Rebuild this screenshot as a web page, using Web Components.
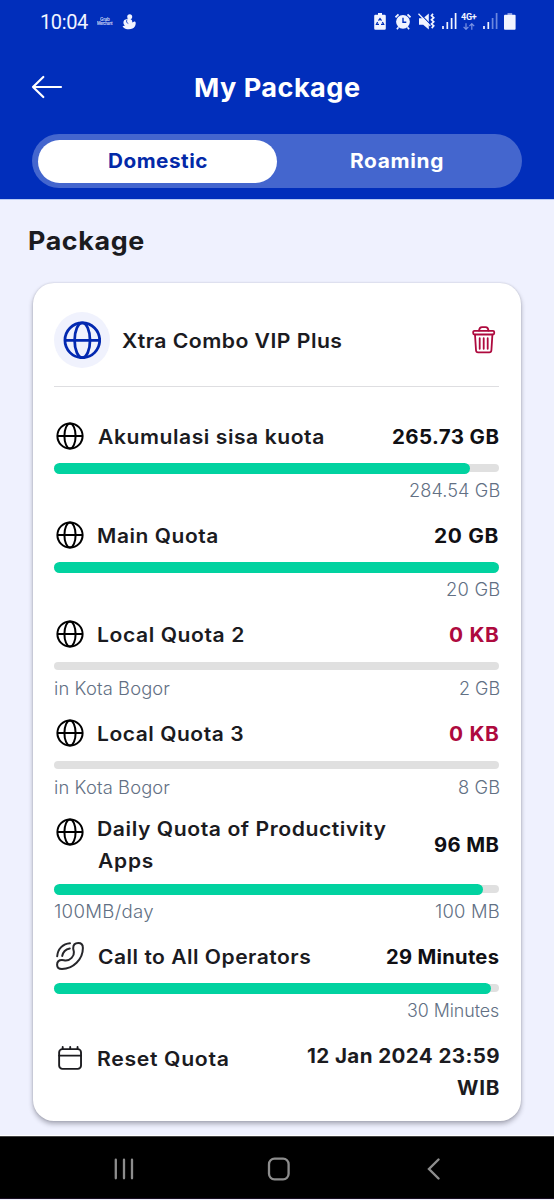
<!DOCTYPE html>
<html lang="en">
<head>
<meta charset="utf-8">
<title>My Package</title>
<style>
  html, body { margin: 0; height: 100%; background: #eff1fe; overflow: hidden; }
  body { font-family: Inter, "Open Sans", sans-serif; }
</style>
</head>
<body>
<package-app></package-app>
<script>
const ICONS = {
  globe: [28, 28, '<g fill="none" stroke="currentColor" stroke-width="2"><circle cx="14" cy="14" r="12.6"/><ellipse cx="14" cy="14" rx="5.6" ry="12.6"/><path d="M1.4 14h25.2"/></g>'],
  phone: [28, 28, '<g fill="none" stroke="#26262a" stroke-width="2" stroke-linecap="round" stroke-linejoin="round"><path d="M17.200 6.200C17.200 2.600 19.400 1.100 22.300 1.100c3.200 0 4.600 2 4.600 4.900C26.900 17.500 17 27 6 27C3 27 1.100 25.600 1.100 22.800c0-2.900 1.800-4.800 4.800-4.800 1.500 0 2.500.5 3.900.5 4.300 0 8.600-4.300 8.100-8.500-.1-1.400-.7-2.500-.7-3.800z"/><path d="M1.200 14.300C1.700 7 7 1.600 14 1.200M6.200 14C6.900 10.200 9.800 7.200 13.800 6.400"/></g>'],
  calendar: [26, 26, '<g fill="none" stroke="currentColor" stroke-width="2" stroke-linecap="round"><rect x="1.200" y="3.300" width="23.300" height="21" rx="3.500"/><path d="M1.200 10.200h23.300M5 1.100v2M13 1.100v2M20.800 1.100v2"/></g>'],
  trash: [24, 28, '<g fill="none" stroke="currentColor" stroke-width="1.800" stroke-linecap="round" stroke-linejoin="round"><rect x="1.200" y="4.900" width="21" height="3.600" rx="1.200"/><path d="M7 4.700C7.300 2.200 8.500 1.200 10 1.200h3.600c1.500 0 2.600 1 2.900 3.500M3 8.600l1 15.700c.1 1.400.8 2.100 2.100 2.100h11.200c1.300 0 2-.7 2.100-2.100L20.400 8.600M7.700 12.200v10.600M11.700 12.200v10.600M15.700 12.200v10.600"/></g>'],
  arrow: [32, 24, '<path d="M12.300 2L2 12l10.300 10M2 12h28" fill="none" stroke="#fff" stroke-width="2.200" stroke-linecap="round" stroke-linejoin="round"/>'],
  guest: [14, 16, '<g fill="currentColor"><circle cx="7.700" cy="2.700" r="2.500"/><path d="M6 4.500c3 0 4.500 1.500 4.300 4 1.200-.2 1.500-1.700 3.200-.5.700 3-.6 5.400-3 6.600C7.500 16 2.500 15.500.5 12.200L3 11.600C1.200 10.200.9 7.700 2.300 5.900z"/></g><path d="M5 5.600c-.9 1.900-.5 3.300 1.300 3.900" stroke="#012ebb" stroke-width=".8" fill="none"/>'],
  saver: [12, 17, '<path d="M4 0h4v1.700h2.600q1.200 0 1.200 1.200v12.600q0 1.200-1.200 1.200H1.400q-1.200 0-1.200-1.200V2.900q0-1.200 1.200-1.200H4z" fill="currentColor"/><path d="M4.500 7.600L6 5.600l1.500 2M8.400 9l1.200 2.300H7M5 11.300H2.500l1.100-2.300" fill="none" stroke="#012ebb" stroke-width="1.300"/>'],
  alarm: [16, 17, '<circle cx="8" cy="8.800" r="6.900" fill="currentColor"/><path d="M.5 4.300l3-3M15.500 4.300l-3-3M3.500 14.300l-1.600 1.900M12.500 14.300l1.600 1.900" stroke="currentColor" stroke-width="1.700" fill="none"/><path d="M8 4.800v4.400h3.300" fill="none" stroke="#012ebb" stroke-width="1.400"/>'],
  mute: [17, 17, '<path d="M5.200 5.200L10.800.6v15.800l-5.600-4.600H1V5.200z" fill="currentColor"/><path d="M1.600.4l10.800 11" stroke="#012ebb" stroke-width="1.200"/><path d="M.5.700l11.800 12.200" stroke="currentColor" stroke-width="1.300"/><path d="M15 .8l-1.500 1.900 2.200 2-2.200 2.100 2.200 2-2.200 2.100 2.200 2-2 2.200" fill="none" stroke="currentColor" stroke-width="1.700"/>'],
  signal: [15, 16, '<path d="M1 13v3M5.300 9v7M9.600 5v11M13.600 0v16" stroke="currentColor" stroke-width="1.700"/>'],
  weak: [15, 16, '<path d="M1 13v3M5.300 9v7" stroke="currentColor" stroke-width="1.700"/><path d="M9.600 5v11M13.600 0v16" stroke="#6c87df" stroke-width="1.700"/>'],
  updown: [12, 7, '<path d="M3 .3v6M.6 3.800L3 6.300l2.400-2.500M8.800 6.800v-6M6.400 3.200L8.800.7l2.400 2.500" fill="none" stroke="#7c94e3" stroke-width="1.200"/>'],
  battery: [12, 17, '<path d="M3.500 0h4.700v2H3.500z" fill="#8297e2"/><rect x="0" y="1.800" width="11.600" height="15" rx="1" fill="currentColor"/>'],
  recents: [20, 22, '<path d="M1.800 1.700v18.600M10 1.700v18.600M18 1.700v18.600" stroke="currentColor" stroke-width="2.300" stroke-linecap="round"/>'],
  home: [24, 24, '<rect x="2" y="1.700" width="19.600" height="20.600" rx="5.500" fill="none" stroke="currentColor" stroke-width="2.300"/>'],
  back: [14, 22, '<path d="M11.500 1.500L2 11l9.500 9.500" fill="none" stroke="currentColor" stroke-width="2.400" stroke-linecap="round"/>']
};

function define(name, html, init) {
  const t = document.createElement('template');
  t.innerHTML = html;
  customElements.define(name, class extends HTMLElement {
    connectedCallback() {
      if (this.shadowRoot) return;
      const root = this.attachShadow({ mode: 'open' });
      root.append(t.content.cloneNode(true));
      if (init) init(this, root);
    }
  });
}

define('ui-icon', '<style>:host{display:block;flex:none}svg{display:block}</style><svg></svg>', (el, root) => {
  const [w, h, body] = ICONS[el.getAttribute('name')];
  const svg = root.querySelector('svg');
  const s = +(el.getAttribute('scale') || 1);
  svg.setAttribute('viewBox', `0 0 ${w} ${h}`);
  svg.setAttribute('width', w * s);
  svg.setAttribute('height', h * s);
  svg.innerHTML = body;
});

/* One line of text, widened and tracked so that its ink spans the given width. */
const ctx = document.createElement('canvas').getContext('2d');
define('fit-text', '<style>:host{display:block;white-space:nowrap;flex:none}span{display:inline-block;transform-origin:0 50%}</style><span></span>', (el, root) => {
  const text = el.getAttribute('text'), width = +el.getAttribute('width');
  const span = root.querySelector('span');
  span.textContent = text;
  const cs = getComputedStyle(el);
  ctx.font = `${cs.fontWeight} ${cs.fontSize} ${cs.fontFamily}`;
  const m = ctx.measureText(text);
  const left = m.actualBoundingBoxLeft * 0.5;
  const ink = left + m.actualBoundingBoxRight;
  const stretch = 1 + (width / ink - 1) * 0.6;
  span.style.letterSpacing = (width / stretch - ink) / (text.length - 1) + 'px';
  span.style.transform = `scaleX(${stretch})`;
  span.style.marginLeft = left * stretch + 'px';
  el.style.width = width + 'px';
});

define('status-bar', `<style>
  :host{display:flex;height:44px;padding:0 38.500px 0 40.500px;align-items:center;color:#f1f4ff;box-sizing:border-box}
  .time{font:400 21px/44px Roboto,sans-serif}
  .brand{margin-left:8.500px;font:600 4.500px/4px Inter,sans-serif;display:flex;flex-direction:column;align-items:center;width:16px;opacity:.85;margin-top:-1px}
  .right{margin-left:auto;display:flex;align-items:center;margin-top:-2px}
  .net{display:flex;flex-direction:column;align-items:center;gap:2px;font:700 9.500px/8px Roboto,sans-serif;width:16px;margin:0 5.300px 0 4.700px}
</style>
<fit-text class="time" text="10:04" width="48"></fit-text>
<div class="brand"><fit-text text="Grab" width="10"></fit-text><fit-text text="Merchant" width="16"></fit-text></div>
<ui-icon name="guest" style="margin:-1px 0 0 9px"></ui-icon>
<div class="right">
  <ui-icon name="saver"></ui-icon>
  <ui-icon name="alarm" style="margin-left:9px"></ui-icon>
  <ui-icon name="mute" style="margin-left:6.500px"></ui-icon>
  <ui-icon name="signal" style="margin-left:7px"></ui-icon>
  <div class="net"><fit-text text="4G+" width="15.500"></fit-text><ui-icon name="updown"></ui-icon></div>
  <ui-icon name="weak"></ui-icon>
  <ui-icon name="battery" style="margin-left:6px"></ui-icon>
</div>`);

define('title-bar', `<style>
  :host{display:grid;grid-template-columns:1fr auto 1fr;align-items:center;height:87px;padding:0 31px;margin-bottom:1px;color:#fff;font-size:26px;font-weight:700;line-height:40px}
  ui-icon{margin-top:-1px}
</style>
<ui-icon name="arrow"></ui-icon><fit-text text="My Package" width="165"></fit-text>`);

define('segment-tabs', `<style>
  :host{display:flex;height:54px;margin:3px 32px 0;padding:6px;box-sizing:border-box;border-radius:27px;background:#4466ce;font-size:19.500px;font-weight:700;line-height:43px}
  div{flex:1;display:flex;justify-content:center;border-radius:22px;color:#fff;height:43px}
  .on{background:#fff;color:#0329a8}
</style>
<div class="on"><fit-text text="Domestic" width="98.500"></fit-text></div>
<div><fit-text text="Roaming" width="92.500"></fit-text></div>`);

define('quota-row', `<style>
  :host{display:block;height:99px}
  :host([lines="2"]){height:124px}
  .head{display:flex;height:49px;justify-content:space-between}
  :host([lines="2"]) .head{height:74px}
  .left{display:flex}
  ui-icon{margin:10px 13.500px 0 2.200px}
  .stack{align-self:center;font-size:19.500px;font-weight:600;line-height:32px;color:#1b1b1f}
  .value{font-weight:700;color:#101014}
  .value.empty{color:#ae0a3e}
  .track{margin-top:3px;height:8px;border-radius:4px;background:#e0e0e0;display:flex;align-items:center}
  .fill{height:11px;border-radius:6px;background:#01d2a0}
  .sub{display:flex;margin-top:4px;font-size:18px;font-weight:300;line-height:30px;color:#627084}
  .sub :last-child{margin-left:auto}
</style>
<div class="head"><div class="left"><div class="stack label"></div></div><div class="stack value"></div></div>
<div class="track"><div class="fill"></div></div><div class="sub"></div>`, (el, root) => {
  const line = s => { const [t, w] = s.split('~'); return `<fit-text text="${t}" width="${w}"></fit-text>`; };
  const put = (sel, attr) => root.querySelector(sel).innerHTML = el.getAttribute(attr).split('|').map(line).join('');
  const icon = document.createElement('ui-icon');
  icon.setAttribute('name', el.getAttribute('icon') || 'globe');
  root.querySelector('.left').prepend(icon);
  put('.label', 'label'); put('.value', 'value'); put('.sub', 'sub');
  root.querySelector('.fill').style.width = el.getAttribute('fill') + '%';
  if (el.getAttribute('fill') === '0') root.querySelector('.value').classList.add('empty');
});

define('reset-row', `<style>
  :host{display:flex;height:80px;box-sizing:border-box;padding-top:9px;font-size:19.500px;line-height:32px;font-weight:600;color:#1b1b1f}
  ui-icon{margin:6px 14.500px 0 4.300px}
  .label{margin-top:3px}
  .date{margin-left:auto;display:flex;flex-direction:column;align-items:flex-end;font-weight:700}
</style>
<ui-icon name="calendar" scale=".94"></ui-icon><fit-text class="label" text="Reset Quota" width="130"></fit-text>
<div class="date"><fit-text text="12 Jan 2024 23:59" width="192"></fit-text><fit-text text="WIB" width="42.500"></fit-text></div>`);

define('package-card', `<style>
  :host{display:block;box-sizing:border-box;height:838px;margin:0 33px;padding:29px 22px 0 21px;border-radius:21px;background:#fff;box-shadow:0 3px 5px #20203055,0 0 2px #20203030}
  header{display:flex;align-items:center;height:56px;padding-bottom:18px;border-bottom:1.500px solid #dedee1;margin-bottom:25px}
  .badge{width:56px;height:56px;border-radius:50%;background:#f0f2fd;display:grid;place-items:center;color:#0329b0}
  .name{font-size:20px;font-weight:600;line-height:32px;margin:2px 0 0 12px;color:#1b1b1f}
  .bin{margin-left:auto;margin-right:3.500px;color:#ae0a3e}
</style>
<header><div class="badge"><ui-icon name="globe" scale="1.380"></ui-icon></div><fit-text class="name" text="Xtra Combo VIP Plus" width="220"></fit-text><ui-icon class="bin" name="trash"></ui-icon></header>
<slot></slot>`);

define('nav-bar', `<style>
  :host{display:grid;grid-template-columns:156px 1fr 156px;align-items:center;height:63px;padding:3px 42px 0 46px;box-sizing:border-box;background:#000;border-top:1px solid #444;border-bottom:1px solid #180d20;color:#8d8d8d;justify-items:center}
</style>
<ui-icon name="recents"></ui-icon><ui-icon name="home"></ui-icon><ui-icon name="back"></ui-icon>`);

define('package-app', `<style>
  :host{display:flex;flex-direction:column;height:1200px;width:554px;background:#eff1fe}
  .top{background:#012ebb;flex:none;border-bottom:1px solid #b9cbf4;box-sizing:border-box;height:200px}
  h1{margin:21px 0 22px 28.500px;font-size:25.500px;font-weight:700;line-height:40px;color:#1b1b20}
  nav-bar{margin-top:auto;margin-bottom:1.500px;box-shadow:0 -1px #fff}
</style>
<div class="top"><status-bar></status-bar><title-bar></title-bar><segment-tabs></segment-tabs></div>
<h1><fit-text text="Package" width="115.500"></fit-text></h1>
<package-card>
  <quota-row label="Akumulasi sisa kuota~225" value="265.73 GB~106.5" sub="284.54 GB~90" fill="93.400"></quota-row>
  <quota-row label="Main Quota~119.5" value="20 GB~64" sub="20 GB~53" fill="100"></quota-row>
  <quota-row label="Local Quota 2~145.5" value="0 KB~50" sub="in Kota Bogor~116|2 GB~40" fill="0"></quota-row>
  <quota-row label="Local Quota 3~145.5" value="0 KB~50" sub="in Kota Bogor~116|8 GB~41" fill="0"></quota-row>
  <quota-row lines="2" label="Daily Quota of Productivity~289|Apps~54.5" value="96 MB~65" sub="100MB/day~99.5|100 MB~64" fill="96.500"></quota-row>
  <quota-row icon="phone" label="Call to All Operators~212" value="29 Minutes~112.5" sub="30 Minutes~91.5" fill="98.200"></quota-row>
  <reset-row></reset-row>
</package-card>
<nav-bar></nav-bar>`);
</script>
</body>
</html>
